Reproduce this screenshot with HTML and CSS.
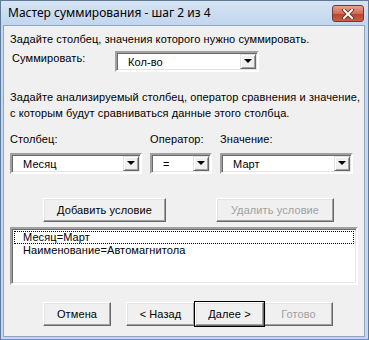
FILE: index.html
```html
<!DOCTYPE html>
<html lang="ru">
<head>
    <meta charset="UTF-8">
    <title>Мастер суммирования</title>
    <link rel="stylesheet" href="styles.css">
</head>
<body>
    <div class="window">
        <div class="titlebar">
            <span class="title">Мастер суммирования - шаг 2 из 4</span>
            <span class="close-btn">
                <svg width="18" height="10" viewBox="0 0 18 10">
                    <path d="M5 1 L13 9 M13 1 L5 9" stroke="#5a2a22" stroke-width="3.6" stroke-linecap="square"/>
                    <path d="M5 1 L13 9 M13 1 L5 9" stroke="#fff" stroke-width="2" stroke-linecap="square"/>
                </svg>
            </span>
        </div>

        <div class="client">
            <p class="hint">Задайте столбец, значения которого нужно суммировать.</p>

            <div class="sum-row">
                <label class="sum-label">Суммировать:</label>
                <div class="combo combo-sum">
                    <span class="combo-text">Кол-во</span>
                    <span class="combo-arrow"></span>
                </div>
            </div>

            <p class="hint hint-two">Задайте анализируемый столбец, оператор сравнения и значение,<br>с которым будут сравниваться данные этого столбца.</p>

            <div class="cond-grid">
                <label>Столбец:</label>
                <label>Оператор:</label>
                <label>Значение:</label>
                <div class="combo">
                    <span class="combo-text">Месяц</span>
                    <span class="combo-arrow"></span>
                </div>
                <div class="combo">
                    <span class="combo-text">=</span>
                    <span class="combo-arrow"></span>
                </div>
                <div class="combo">
                    <span class="combo-text">Март</span>
                    <span class="combo-arrow"></span>
                </div>
            </div>

            <div class="cond-buttons">
                <button class="btn btn-wide">Добавить условие</button>
                <button class="btn btn-wide" disabled>Удалить условие</button>
            </div>

            <div class="listbox">
                <div class="list-item focused">Месяц=Март</div>
                <div class="list-item">Наименование=Автомагнитола</div>
            </div>

            <div class="nav-buttons">
                <button class="btn btn-nav btn-cancel">Отмена</button>
                <button class="btn btn-nav">&lt; Назад</button>
                <button class="btn btn-nav btn-default">Далее &gt;</button>
                <button class="btn btn-nav" disabled>Готово</button>
            </div>
        </div>
    </div>
</body>
</html>
```

FILE: styles.css
```css
body {
    margin: 0;
    padding: 0;
    background-color: #fff;
}

.window {
    width: 369px;
    height: 340px;
    box-sizing: border-box;
    background-color: #c4d7ee;
    border: 1px solid #5f7a97;
    border-bottom-color: #2fa8d8;
    display: flex;
    flex-direction: column;
    font-family: "Liberation Sans", Arial, sans-serif;
    font-size: 11px;
    letter-spacing: 0.1px;
    color: #000;
}

.titlebar {
    height: 24px;
    display: flex;
    align-items: flex-start;
    justify-content: space-between;
    padding: 0 4px 0 7px;
    background: linear-gradient(#d6e4f4, #c2d6ee);
}

.title {
    font-family: "Noto Sans", "Open Sans", sans-serif;
    font-size: 12px;
    letter-spacing: 0;
    line-height: 24px;
}

.close-btn {
    width: 30px;
    height: 15px;
    margin-top: 4px;
    border: 1px solid #6c3b35;
    border-radius: 3px;
    background: linear-gradient(#e6a290, #cf6a55 50%, #b8422d 51%, #c95f48);
    display: flex;
    align-items: center;
    justify-content: center;
}

.client {
    flex: 1;
    margin: 0 3px 2px 2px;
    background-color: #f0f0f0;
    border: 1px solid #8ea4bf;
    padding: 0 0 0 6px;
    position: relative;
}

.hint {
    margin: 5px 0 0 0;
    line-height: 16px;
}

.sum-row {
    display: flex;
    align-items: flex-start;
    margin-top: 4px;
}

.sum-label {
    width: 103px;
    padding-left: 2px;
    line-height: 14px;
}

.combo {
    height: 21px;
    box-sizing: border-box;
    background-color: #fff;
    border: 2px solid;
    border-color: #a0a0a0 #fff #fff #a0a0a0;
    box-shadow: inset 1px 1px 0 #696969, inset -1px -1px 0 #e3e3e3;
    display: flex;
    align-items: center;
    justify-content: space-between;
    padding: 1px 1px 1px 3px;
}

.combo-sum {
    width: 144px;
}

.combo-text {
    padding-left: 8px;
}

.combo-arrow {
    width: 16px;
    height: 15px;
    box-sizing: border-box;
    background-color: #f0f0f0;
    border: 1px solid;
    border-color: #e3e3e3 #696969 #696969 #e3e3e3;
    box-shadow: inset 1px 1px 0 #fff, inset -1px -1px 0 #a0a0a0;
    position: relative;
}

.combo-arrow::after {
    content: "";
    position: absolute;
    left: 3px;
    top: 4px;
    border-left: 4px solid transparent;
    border-right: 4px solid transparent;
    border-top: 4px solid #000;
}

.hint-two {
    margin-top: 17px;
}

.cond-grid {
    display: grid;
    grid-template-columns: 132px 62px 133px;
    column-gap: 8px;
    row-gap: 7px;
    margin-top: 11px;
}

.cond-grid label {
    line-height: 14px;
}

.cond-buttons {
    display: flex;
    gap: 50px;
    margin: 24px 0 0 33px;
}

.btn {
    font-family: "Liberation Sans", Arial, sans-serif;
    font-size: 11px;
    letter-spacing: 0.1px;
    color: #000;
    height: 24px;
    padding: 0;
    background-color: #f0f0f0;
    border: 1px solid;
    border-color: #fff #696969 #696969 #fff;
    box-shadow: inset -1px -1px 0 #a0a0a0, inset 1px 1px 0 #e3e3e3;
    border-radius: 0;
}

.btn:disabled {
    color: #a0a0a0;
}

.btn-wide {
    width: 123px;
}

.btn-wide + .btn-wide {
    width: 118px;
}

.listbox {
    margin: 5px 6px 0 0;
    height: 58px;
    box-sizing: border-box;
    background-color: #fff;
    border: 2px solid;
    border-color: #a0a0a0 #fff #fff #a0a0a0;
    box-shadow: inset 1px 1px 0 #696969, inset -1px -1px 0 #e3e3e3;
    padding: 2px 2px 0 2px;
}

.list-item {
    height: 13px;
    line-height: 13px;
    padding-left: 9px;
}

.list-item.focused {
    outline: 1px dotted #000;
    outline-offset: -1px;
}

.nav-buttons {
    display: flex;
    margin: 17px 0 0 33px;
}

.btn-nav {
    width: 69px;
}

.btn-cancel {
    width: 68px;
    margin-right: 15px;
}

.btn-default {
    outline: 1px solid #000;
    outline-offset: 0;
    position: relative;
    z-index: 1;
}
```
